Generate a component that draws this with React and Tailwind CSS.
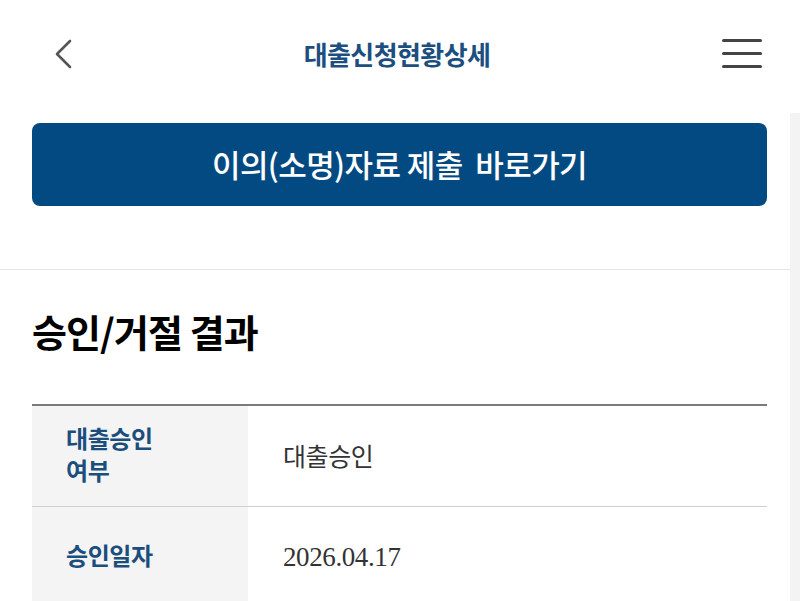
const font = { fontFamily: '"Noto Sans CJK KR", "Noto Sans", sans-serif' };

function Header() {
  return (
    <div className="h-[113px] pb-[6px] flex items-center justify-between pl-[52px] pr-[38px] bg-white">
      <svg width="24" height="32" viewBox="0 0 24 32" fill="none">
        <path d="M18 3 L5 16 L18 29" stroke="#555" strokeWidth="2.6" strokeLinecap="round" strokeLinejoin="round" />
      </svg>
      <h1 className="text-[26px] font-bold text-[#1c4f80] tracking-[-0.6px] mr-[4px]">대출신청현황상세</h1>
      <div className="w-[40px] flex flex-col gap-[10px]">
        <span className="block h-[3px] rounded-full bg-[#444]" />
        <span className="block h-[3px] rounded-full bg-[#444]" />
        <span className="block h-[3px] rounded-full bg-[#444]" />
      </div>
    </div>
  );
}

function Row({ label, value, serif }) {
  return (
    <div className="flex border-b border-[#cfcfcf]">
      <div className="w-[216px] shrink-0 bg-[#f4f4f4] pl-[34px] pr-4 min-h-[100px] flex items-center">
        <span className="text-[24px] leading-[32px] font-bold text-[#1b4d7d] tracking-[-0.4px] -mt-[4px]">{label}</span>
      </div>
      <div className="flex-1 pl-[35px] flex items-center">
        {serif ? (
          <span className="text-[27px] text-[#333] tracking-[-0.4px]" style={{ fontFamily: '"Liberation Serif", serif' }}>
            {value}
          </span>
        ) : (
          <span className="text-[25px] text-[#333] tracking-[-0.4px]">{value}</span>
        )}
      </div>
    </div>
  );
}

export default function App() {
  return (
    <div className="w-full h-[601px] overflow-hidden bg-white" style={font}>
      <Header />
      <div className="flex">
        <div className="flex-1">
          <div className="pl-8 pr-[23px] pt-[10px] pb-[63px]">
            <button className="w-full h-[83px] rounded-lg bg-[#044a82] text-white text-[31px] font-medium tracking-[-0.6px]">
              이의(소명)자료 제출&nbsp; 바로가기
            </button>
          </div>
          <div className="border-t-[1.5px] border-[#e6e6e6] pl-8 pr-[23px] pt-[38px]">
            <h2 className="text-[38px] leading-[46px] font-bold text-black tracking-[-0.9px]">승인/거절 결과</h2>
            <div className="mt-[50px] border-t-2 border-[#7a7a7a]">
              <Row label={<>대출승인<br />여부</>} value="대출승인" />
              <Row label="승인일자" value="2026.04.17" serif />
            </div>
          </div>
        </div>
        <div className="w-[10px] bg-[#f3f3f3] h-[500px]" />
      </div>
    </div>
  );
}
